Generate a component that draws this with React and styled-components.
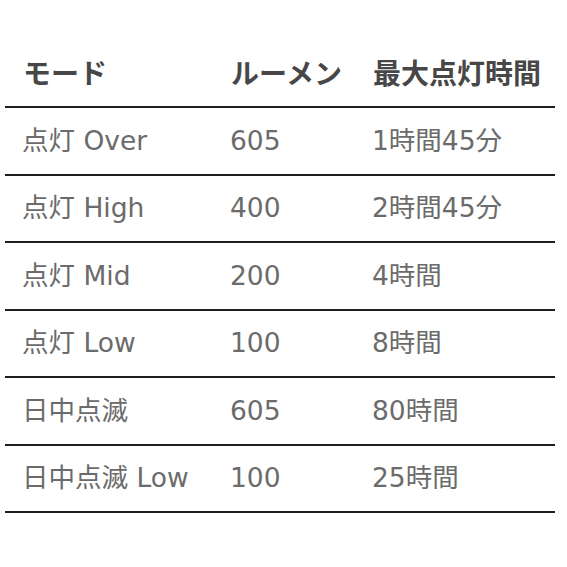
import React from "react";
import styled, { createGlobalStyle } from "styled-components";

const GlobalStyle = createGlobalStyle`
  html, body {
    margin: 0;
    padding: 0;
    background: #ffffff;
  }
  body {
    font-family: "DejaVu Sans", "Noto Sans CJK JP", sans-serif;
  }
`;

const rows = [
  { mode: "点灯 Over", lumen: "605", time: "1時間45分" },
  { mode: "点灯 High", lumen: "400", time: "2時間45分" },
  { mode: "点灯 Mid", lumen: "200", time: "4時間" },
  { mode: "点灯 Low", lumen: "100", time: "8時間" },
  { mode: "日中点滅", lumen: "605", time: "80時間" },
  { mode: "日中点滅 Low", lumen: "100", time: "25時間" },
];

const Page = styled.div`
  width: 567px;
  height: 567px;
  padding: 37px 12px 0 5px;
  box-sizing: border-box;
`;

const Table = styled.div`
  display: flex;
  flex-direction: column;
`;

const Row = styled.div`
  display: grid;
  grid-template-columns: 208px 142px 1fr;
  align-items: center;
  height: ${(p) => (p.$head ? "71px" : "67.5px")};
  border-bottom: 2px solid #1e1e1e;
  box-sizing: border-box;
`;

const Cell = styled.div`
  padding-left: ${(p) => (p.$head ? "18px" : "17px")};
  font-family: ${(p) =>
    p.$head ? '"Noto Sans CJK JP", sans-serif' : '"DejaVu Sans", "Noto Sans CJK JP", sans-serif'};
  font-size: ${(p) => (p.$head ? "28px" : "26.5px")};
  line-height: 32px;
  font-weight: ${(p) => (p.$head ? 700 : 400)};
  color: ${(p) => (p.$head ? "#474747" : "#6b6b6b")};
  white-space: nowrap;
`;

export default function App() {
  return (
    <>
      <GlobalStyle />
      <Page>
        <Table>
          <Row $head>
            <Cell $head>モード</Cell>
            <Cell $head>ルーメン</Cell>
            <Cell $head>最大点灯時間</Cell>
          </Row>
          {rows.map((r) => (
            <Row key={r.mode}>
              <Cell>{r.mode}</Cell>
              <Cell>{r.lumen}</Cell>
              <Cell>{r.time}</Cell>
            </Row>
          ))}
        </Table>
      </Page>
    </>
  );
}
